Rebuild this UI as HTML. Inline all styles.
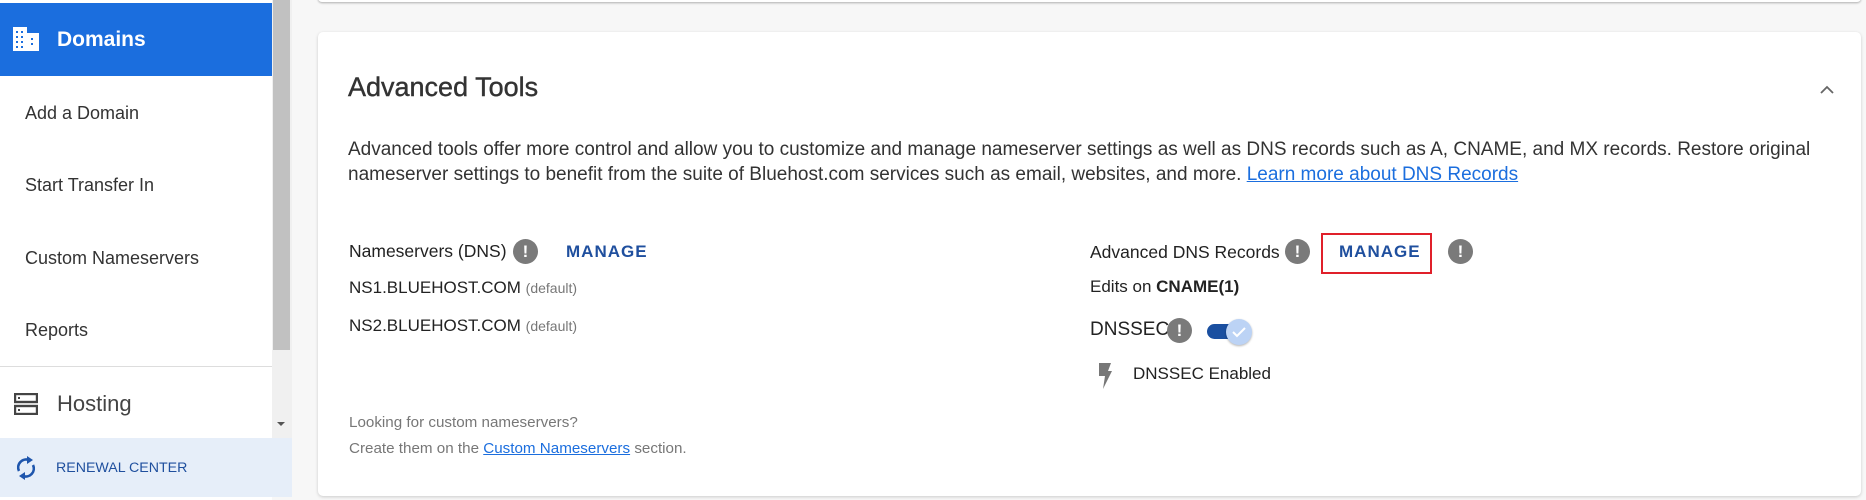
<!DOCTYPE html>
<html><head><meta charset="utf-8"><style>
*{margin:0;padding:0;box-sizing:border-box}
body{width:1866px;height:500px;overflow:hidden;background:#f7f7f7;font-family:"Liberation Sans",sans-serif;position:relative;color:#222}
.a{position:absolute;white-space:nowrap}
.side{position:absolute;left:0;top:0;width:272px;height:500px;background:#fff}
.mi{position:absolute;left:25px;font-size:18px;color:#333;line-height:20px}
.info{position:absolute;width:25px;height:25px;border-radius:50%;background:#7a7a7a;color:#fff;font-weight:bold;font-size:17px;text-align:center;line-height:25px}
.mg{position:absolute;color:#1f4f9e;font-weight:bold;font-size:17px;letter-spacing:1px;line-height:20px}
</style></head><body>
<div class="side"></div>
<div class="a" style="left:0;top:3px;width:272px;height:73px;background:#1b6ede"></div>
<svg class="a" style="left:13px;top:27px" width="26" height="24" viewBox="0 0 26 24"><rect x="0" y="0" width="14" height="24" fill="#fff"/><rect x="14" y="6" width="12" height="18" fill="#fff"/><g fill="#1b6ede"><rect x="3" y="4" width="2" height="2"/><rect x="8" y="4" width="2" height="2"/><rect x="3" y="9" width="2" height="2"/><rect x="8" y="9" width="2" height="2"/><rect x="3" y="14" width="2" height="2"/><rect x="8" y="14" width="2" height="2"/><rect x="3" y="19" width="2" height="2"/><rect x="8" y="19" width="2" height="2"/><rect x="18" y="11" width="2" height="2"/><rect x="18" y="16" width="2" height="2"/></g></svg>
<div class="a" style="left:57px;top:27px;font-size:21px;font-weight:bold;color:#fff;line-height:26px">Domains</div>
<div class="mi a" style="top:103px">Add a Domain</div>
<div class="mi a" style="top:175px">Start Transfer In</div>
<div class="mi a" style="top:248px">Custom Nameservers</div>
<div class="mi a" style="top:320px">Reports</div>
<div class="a" style="left:0;top:366px;width:272px;height:1px;background:#ddd"></div>
<svg class="a" style="left:14px;top:393px" width="24" height="22" viewBox="0 0 24 22"><rect x="1" y="1" width="22" height="8" fill="none" stroke="#444" stroke-width="2.4"/><rect x="1" y="13" width="22" height="8" fill="none" stroke="#444" stroke-width="2.4"/><rect x="4" y="4" width="2" height="2" fill="#444"/><rect x="4" y="16" width="2" height="2" fill="#444"/></svg>
<div class="a" style="left:57px;top:391px;font-size:22px;color:#444;line-height:26px">Hosting</div>
<div class="a" style="left:272px;top:0;width:20px;height:438px;background:#f0f0f0"></div>
<div class="a" style="left:273px;top:0;width:17px;height:350px;background:#c1c1c1"></div>
<div class="a" style="left:277px;top:422px;width:0;height:0;border-left:4px solid transparent;border-right:4px solid transparent;border-top:4px solid #555"></div>
<div class="a" style="left:0;top:438px;width:292px;height:59px;background:#e6eef9"></div>
<svg class="a" style="left:15px;top:456px" width="22" height="24" viewBox="0 0 22 24"><path d="M4 15 A8 8 0 0 1 14 4" fill="none" stroke="#1f56ad" stroke-width="2.6"/><path d="M12 0 L18 4 L12 8Z" fill="#1f56ad"/><path d="M18 9 A8 8 0 0 1 8 20" fill="none" stroke="#1f56ad" stroke-width="2.6"/><path d="M10 16 L4 20 L10 24Z" fill="#1f56ad"/></svg>
<div class="a" style="left:56px;top:459px;font-size:14.2px;color:#1f4f9e;line-height:18px">RENEWAL CENTER</div>
<div class="a" style="left:318px;top:-10px;width:1543px;height:12px;background:#fff;border-radius:4px;box-shadow:0 1px 2px rgba(0,0,0,.3)"></div>
<div class="a" style="left:318px;top:32px;width:1543px;height:464px;background:#fff;border-radius:5px;box-shadow:0 1px 3px rgba(0,0,0,.18)"></div>
<div class="a" style="left:348px;top:71px;font-size:27px;color:#333;line-height:32px;-webkit-text-stroke:0.4px #333">Advanced Tools</div>
<svg class="a" style="left:1820px;top:85px" width="14" height="9" viewBox="0 0 14 9"><path d="M1 8 L7 2 L13 8" fill="none" stroke="#666" stroke-width="1.8"/></svg>
<div class="a" style="left:348px;top:137px;font-size:19px;color:#333;line-height:25px">Advanced tools offer more control and allow you to customize and manage nameserver settings as well as DNS records such as A, CNAME, and MX records. Restore original<br>nameserver settings to benefit from the suite of Bluehost.com services such as email, websites, and more. <span style="color:#1b6ede;text-decoration:underline">Learn more about DNS Records</span></div>
<div class="a" style="left:349px;top:241px;font-size:17.5px;line-height:20px">Nameservers (DNS)</div>
<div class="info" style="left:513px;top:239px">!</div>
<div class="mg a" style="left:566px;top:242px">MANAGE</div>
<div class="a" style="left:349px;top:278px;font-size:17px;line-height:20px">NS1.BLUEHOST.COM <span style="font-size:14px;color:#777">(default)</span></div>
<div class="a" style="left:349px;top:316px;font-size:17px;line-height:20px">NS2.BLUEHOST.COM <span style="font-size:14px;color:#777">(default)</span></div>
<div class="a" style="left:349px;top:414px;font-size:15.2px;color:#777;line-height:18px">Looking for custom nameservers?</div>
<div class="a" style="left:349px;top:440px;font-size:15.2px;color:#777;line-height:18px">Create them on the <span style="color:#1b6ede;text-decoration:underline">Custom Nameservers</span> section.</div>
<div class="a" style="left:1090px;top:242px;font-size:17.5px;line-height:20px">Advanced DNS Records</div>
<div class="info" style="left:1285px;top:239px">!</div>
<div class="a" style="left:1321px;top:233px;width:111px;height:41px;border:2px solid #e0202a"></div>
<div class="mg a" style="left:1339px;top:242px">MANAGE</div>
<div class="info" style="left:1448px;top:239px">!</div>
<div class="a" style="left:1090px;top:277px;font-size:17px;line-height:20px">Edits on <b>CNAME(1)</b></div>
<div class="a" style="left:1090px;top:319px;font-size:19px;line-height:22px">DNSSEC</div>
<div class="info" style="left:1167px;top:318px">!</div>
<div class="a" style="left:1207px;top:324px;width:34px;height:15px;border-radius:8px;background:#1a4fa0"></div>
<div class="a" style="left:1226px;top:319px;width:26px;height:26px;border-radius:50%;background:#bcd3f5;box-shadow:0 1px 2px rgba(0,0,0,.3)"></div>
<svg class="a" style="left:1231px;top:325px" width="16" height="14" viewBox="0 0 16 14"><path d="M2 7 L6 11 L14 3" fill="none" stroke="#fff" stroke-width="2"/></svg>
<svg class="a" style="left:1097px;top:363px" width="16" height="26" viewBox="0 0 16 26"><path d="M2 0 L14 0 L11 8 L15 8 L6 26 L8 13 L2 13Z" fill="#777"/></svg>
<div class="a" style="left:1133px;top:364px;font-size:17px;line-height:20px">DNSSEC Enabled</div>
</body></html>
